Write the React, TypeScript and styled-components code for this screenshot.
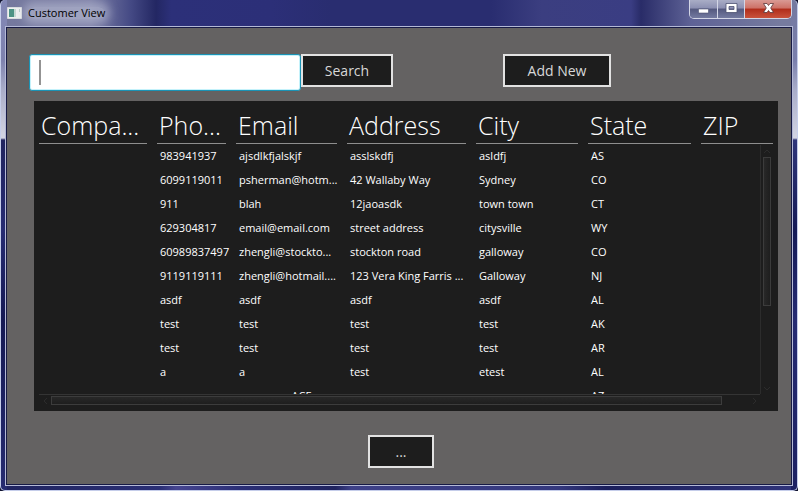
import React from "react";
import styled, { createGlobalStyle } from "styled-components";

const ui = `"Open Sans", "Noto Sans", sans-serif`;
const light = "#c5cdea";

const GlobalStyle = createGlobalStyle`
  * { box-sizing: border-box; }
  body { margin: 0; background: #10122f; }
  button, input { font-family: ${ui}; }
`;

const Frame = styled.div`
  display: flex;
  flex-direction: column;
  height: 100vh;
  min-height: 320px;
  padding: 0 5px 5px;
  overflow: hidden;
  border: 1px solid ${light};
  border-top: 0;
  border-radius: 5px;
  font-family: ${ui};
  background:
    linear-gradient(#8388b6 0, #7e82ae 60px, #a9adc9 90px, #d3d5e3 138px, #20245f 140px, #262b72 230px, #151954 320px, #262b70) left / 6px 100% no-repeat,
    linear-gradient(#74799f 0, #7a7fac 60px, #a9adc9 90px, #d3d5e3 138px, #30367a 140px, #151a56 230px, #262b72 320px, #1d2162) right / 6px 100% no-repeat,
    linear-gradient(90deg, #20245f, #2a2f75 20%, #464590 22%, #2b2f76 30%, #20245f 42%, #3e4188 44%, #34387d 70%, #1b1f5b 76%, #30347a) bottom / 100% 6px no-repeat,
    linear-gradient(90deg, #74789d 0, #7c7fa6 90px, #444984 130px, #232763 155px, #2c3079 170px, #2c2f78 270px, #292d70 330px, #292d70 490px, #3b3e80 540px, #3a3d83 630px, #292c68 640px, #5e6296 690px, #767b9f 780px);
`;

const TitleBar = styled.header`
  display: flex;
  flex: none;
  align-items: flex-start;
  height: 27px;
`;

const Title = styled.h1`
  display: flex;
  align-items: center;
  flex: 1;
  gap: 6px;
  height: 26px;
  margin: 0;
  padding-left: 1px;
  font-size: 11px;
  font-weight: 400;
  color: #000;
`;

const TitleText = styled.span`
  border-radius: 10px;
  background: rgba(190, 193, 215, 0.55);
  box-shadow: 0 0 8px 5px rgba(190, 193, 215, 0.55);
  line-height: 12px;
`;

const Controls = styled.div`
  display: flex;
  height: 19px;
  overflow: hidden;
  border: 1px solid #d3d6e6;
  border-top: 0;
  border-radius: 0 0 5px 5px;
`;

const Control = styled.button<{ $close?: boolean }>`
  display: flex;
  align-items: center;
  justify-content: center;
  width: ${(p) => (p.$close ? 47 : 27)}px;
  padding: 0 0 2px;
  border: 0;
  background: ${(p) =>
    p.$close
      ? "linear-gradient(#d99a94, #cd7166 45%, #b02d1b 50%, #c9523c)"
      : "linear-gradient(#a9adc6, #8c90b2 45%, #54597f 50%, #747aa0)"};
  & + & { border-left: 1px solid #d3d6e6; }
`;

const Client = styled.main`
  display: flex;
  flex: 1;
  flex-direction: column;
  min-height: 0;
  padding: 26px 13px 16px 27px;
  border: 1px solid #171a45;
  outline: 1px solid #b4b9d6;
  background: #646262;
`;

const Toolbar = styled.form`
  display: flex;
  align-items: flex-start;
  margin-left: -5px;
`;

const SearchField = styled.label`
  display: grid;
  flex: 0 1 272px;
  align-items: center;
  > * { grid-area: 1 / 1; }
`;

const SearchBox = styled.input`
  min-width: 0;
  height: 37px;
  padding: 0 9px;
  border: 1px solid #1b93b5;
  border-radius: 3px;
  outline: 0;
  background: #fff;
  box-shadow: inset 0 0 0 1px #c4f2fb;
  font-size: 18px;
`;

const Caret = styled.span`
  width: 2px;
  height: 25px;
  margin-left: 10px;
  background: #939393;
`;

const Button = styled.button<{ $width: number; $apart?: boolean }>`
  width: ${(p) => p.$width}px;
  height: 33px;
  margin-left: ${(p) => (p.$apart ? 110 : 0)}px;
  padding: 0;
  border: 2px solid #e2e2e2;
  background: #1d1d1d;
  color: #d8d8d8;
  font-size: 14px;
`;

const Panel = styled.section`
  display: grid;
  flex: 1;
  grid-template: 44px minmax(0, 1fr) 17px / minmax(0, 1fr) 13px 5px;
  min-height: 0;
  margin-top: 10px;
  background: #1d1d1d;
`;

const Viewport = styled.div`
  grid-area: 1 / 1 / 3 / 4;
  min-height: 0;
  overflow: hidden;
`;

const Table = styled.table`
  width: 100%;
  border-spacing: 0;
  table-layout: fixed;
  color: #fff;
`;

const HeadCell = styled.th`
  height: 44px;
  padding: 0 5px;
  text-align: left;
  font-size: 25px;
  font-weight: 300;
  white-space: nowrap;
`;

const HeadText = styled.div`
  height: 36px;
  margin-top: 6px;
  padding-left: 2px;
  border-bottom: 1px solid #8e8e8e;
  line-height: 34px;
`;

const Cell = styled.td`
  height: 24px;
  padding: 0 0 2px 8px;
  font-size: 11px;
  line-height: 16px;
  white-space: nowrap;
`;

const VScroll = styled.div`
  display: flex;
  grid-area: 2 / 2;
  flex-direction: column;
  align-items: center;
  border-left: 1px solid #2c2c2c;
  background: #1d1d1d;
`;

const HScroll = styled.div`
  display: flex;
  grid-area: 3 / 1 / 4 / 2;
  align-items: flex-start;
  margin-left: 5px;
  border-top: 1px solid #343434;
`;

const Thumb = styled.div<{ $vertical?: boolean }>`
  flex: ${(p) => (p.$vertical ? "0 0 60%" : "0 0 93%")};
  width: ${(p) => (p.$vertical ? "8px" : "auto")};
  height: ${(p) => (p.$vertical ? "auto" : "9px")};
  margin: ${(p) => (p.$vertical ? "0" : "1px 0 0")};
  border: 1px solid #3c3c3c;
  background: linear-gradient(${(p) => (p.$vertical ? "90deg" : "180deg")}, #282828, #1e1e1e);
`;

const Arrow = styled.svg`
  flex: none;
  width: 12px;
  height: 12px;
  fill: none;
  stroke: #2c2c2c;
`;

const Push = styled.span`
  flex: 1;
`;

const Footer = styled.footer`
  display: flex;
  justify-content: center;
  padding: 24px 10px 0 0;
`;

const columns = [
  { name: "Compa...", width: 118 },
  { name: "Pho...", width: 79 },
  { name: "Email", width: 111 },
  { name: "Address", width: 129 },
  { name: "City", width: 112 },
  { name: "State", width: 113 },
  { name: "ZIP" },
];

const rows = [
  ["", "983941937", "ajsdlkfjalskjf", "asslskdfj", "asldfj", "AS", ""],
  ["", "6099119011", "psherman@hotm...", "42 Wallaby Way", "Sydney", "CO", ""],
  ["", "911", "blah", "12jaoasdk", "town town", "CT", ""],
  ["", "629304817", "email@email.com", "street address", "citysville", "WY", ""],
  ["", "60989837497", "zhengli@stockto...", "stockton road", "galloway", "CO", ""],
  ["", "9119119111", "zhengli@hotmail....", "123 Vera King Farris ...", "Galloway", "NJ", ""],
  ["", "asdf", "asdf", "asdf", "asdf", "AL", ""],
  ["", "test", "test", "test", "test", "AK", ""],
  ["", "test", "test", "test", "test", "AR", ""],
  ["", "a", "a", "test", "etest", "AL", ""],
  ["", "", "nonsense ACE", "", "", "AZ", ""],
];

export default function App() {
  return (
    <>
      <GlobalStyle />
      <Frame>
        <TitleBar>
          <Title>
            <svg width="15" height="12" viewBox="0 0 15 12" aria-hidden="true">
              <path fill="#eef0f0" stroke="#d8dcdf" d="M.5.5h14v11H.5z" />
              <path fill="#4d9385" d="M2 2h5v8H2z" />
              <path fill="#c5d8d3" d="M7 2h2v8H7z" />
              <path fill="#b9cfc9" d="M12 2h1v3h-1z" />
            </svg>
            <TitleText>Customer View</TitleText>
          </Title>
          <Controls>
            <Control type="button" aria-label="Minimize">
              <svg width="13" height="12" viewBox="0 0 13 12">
                <path fill="#fff" stroke="#4d5272" strokeWidth=".6" d="M1.500 7h10v4h-10z" />
              </svg>
            </Control>
            <Control type="button" aria-label="Maximize">
              <svg width="13" height="12" viewBox="0 0 13 12">
                <path fill="#fff" fillRule="evenodd" stroke="#4d5272" strokeWidth=".8" d="M1 1.500h11v9H1zM4 4.500h5v3H4z" />
              </svg>
            </Control>
            <Control type="button" aria-label="Close" $close>
              <svg width="13" height="12" viewBox="0 0 13 12">
                <path fill="#fff" stroke="#5b3638" strokeWidth=".8" d="M1.500 1.500h3.500l1.500 2 1.500-2h3.500L8.700 6l2.800 4.500H8l-1.500-2-1.500 2H1.500L4.300 6z" />
              </svg>
            </Control>
          </Controls>
        </TitleBar>
        <Client>
          <Toolbar onSubmit={(e) => e.preventDefault()}>
            <SearchField>
              <SearchBox type="text" aria-label="Search customers" />
              <Caret />
            </SearchField>
            <Button type="submit" $width={92}>Search</Button>
            <Button type="button" $width={108} $apart>Add New</Button>
          </Toolbar>
          <Panel>
            <Viewport>
              <Table>
                <colgroup>
                  {columns.map((c) => <col key={c.name} width={c.width} />)}
                </colgroup>
                <thead>
                  <tr>
                    {columns.map((c) => (
                      <HeadCell key={c.name} scope="col"><HeadText>{c.name}</HeadText></HeadCell>
                    ))}
                  </tr>
                </thead>
                <tbody>
                  {rows.map((row, i) => (
                    <tr key={i}>{row.map((value, j) => <Cell key={j}>{value}</Cell>)}</tr>
                  ))}
                </tbody>
              </Table>
            </Viewport>
            <VScroll>
              <Arrow viewBox="0 0 12 12"><path d="M3 8l3-3 3 3" /></Arrow>
              <Thumb $vertical />
              <Push />
              <Arrow viewBox="0 0 12 12"><path d="M3 5l3 3 3-3" /></Arrow>
            </VScroll>
            <HScroll>
              <Arrow viewBox="0 0 12 12"><path d="M8 3L5 6l3 3" /></Arrow>
              <Thumb />
              <Push />
              <Arrow viewBox="0 0 12 12"><path d="M5 3l3 3-3 3" /></Arrow>
            </HScroll>
          </Panel>
          <Footer><Button type="button" $width={66}>...</Button></Footer>
        </Client>
      </Frame>
    </>
  );
}
